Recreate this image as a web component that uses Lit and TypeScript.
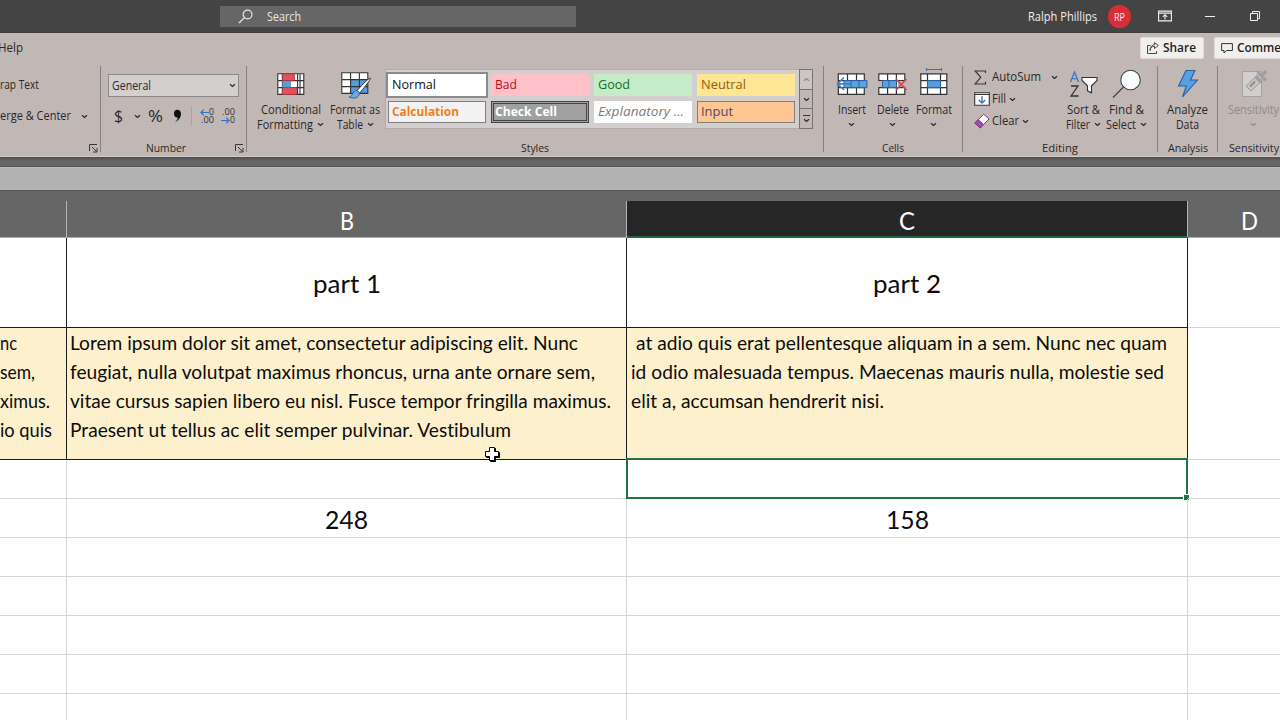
import { LitElement, html, css, svg } from "lit";
import { customElement, property } from "lit/decorators.js";

/** One line of text, squeezed or stretched to an exact advance width. */
@customElement("fit-text")
class FitText extends LitElement {
  @property({ type: Number }) w = 0;
  @property() text = "";
  static styles = css`
    :host { display: inline-block; white-space: pre; flex: none; text-align: left; font-variant-ligatures: none; }
    .t { display: inline-block; transform-origin: 0 50%; }
  `;
  render() {
    return html`<span class="t">${this.text}</span>`;
  }
  updated() {
    const s = this.renderRoot.querySelector(".t") as HTMLElement;
    s.style.transform = "none";
    this.style.width = "auto";
    const natural = s.getBoundingClientRect().width;
    this.style.width = `${this.w}px`;
    if (natural > 0) s.style.transform = `scaleX(${this.w / natural})`;
  }
}

const fit = (text: string, w: number, cls = "") =>
  html`<fit-text class=${cls} .text=${text} .w=${w}></fit-text>`;

const chev = (cls = "") => html`<svg class="chev ${cls}" width="7" height="5" viewBox="0 0 7 5">
  <path d="M1 1.2 3.5 3.5 6 1.2" fill="none" stroke="currentColor" stroke-width="1.2"/></svg>`;

const launcher = html`<svg class="launch" width="9" height="9" viewBox="0 0 9 9">
  <path d="M.5 7V.5H8M3 3l4.5 4.5M8 4v4H4" fill="none" stroke="#3a3635"/></svg>`;

const tableGrid = svg`<path d="M.8.8h26v20.6H.8z" fill="#fff"/>`;
const gridLines = svg`<path d="M.8.8h26v20.6H.8zM.8 7.6h26M.8 14.6h26M9.6.8v20.6M18.4.8v20.6" fill="none" stroke="#333" stroke-width="1.1"/>`;

const icons = {
  conditional: html`<svg width="28" height="22" viewBox="0 0 28 22">
    ${tableGrid}
    <path d="M.8.8h26v20.6H.8zM.8 7.6h26M.8 14.6h26M5.4.8v20.6M20.6.8v20.6M23 .8v20.6" fill="none" stroke="#333" stroke-width="1.1"/>
    <path d="M5.4.8h12v6.8h-12zM5.4 14.6h14v6.8h-14z" fill="#e0525a" stroke="#a8353b" stroke-width=".8"/>
    <path d="M5.4 8h8.6v6.2H5.4z" fill="#559ddd"/></svg>`,
  table: html`<svg width="30" height="28" viewBox="0 0 30 28">
    ${tableGrid}<path d="M9.6 7.6h17.2v13.8H9.6z" fill="#559ddd"/>${gridLines}
    <path d="M29.3 6.2c1 1-8.5 12.6-10.800 14.600l-2.400-2.100C18 16 28.200 5.300 29.300 6.200z" fill="#fff" stroke="#333"/>
    <path d="M15.800 18.400c-4 0-3.600 5.400-7.600 6.500 4.500 2.600 10.300.8 10.400-4.100z" fill="#6ea9e4" stroke="#2b62a5"/></svg>`,
  insert: html`<svg width="32" height="22" viewBox="0 0 32 22">
    <g transform="translate(1.500 0)">${tableGrid}
    <path d="M.8.8h26v20.600H.8zM.8 7.600h26M.8 14.600h26M10 .8v20.600M19 .8v20.600" fill="none" stroke="#333" stroke-width="1.200"/></g>
    <path d="M8 7.600h23v7H8zM15 7.600v7M23 7.600v7" fill="#5ba2e0" stroke="#2b62a5"/>
    <path d="M14 10.800H1.500M8 4.500 1.500 10.800 8 17" fill="none" stroke="#477fc4" stroke-width="1.700"/></svg>`,
  del: html`<svg width="30" height="22" viewBox="0 0 30 22">
    ${tableGrid}
    <path d="M.8.8h26v20.600H.8zM.8 7.600h26M.8 14.600h26M9.600.8v20.600M18.400.8v20.600" fill="none" stroke="#333" stroke-width="1.200"/>
    <path d="M0 8.200h4v5.800H0z" fill="#c1b8b6"/><path d="M20 8.200h9v5.800h-9z" fill="#c1b8b6"/>
    <path d="M4.500 7.600h14v7h-14zM11 7.600v7" fill="#5ba2e0" stroke="#2b62a5"/>
    <path d="M18 6l10.500 11M28.500 6 18 17" stroke="#cf4a4c" stroke-width="1.800"/></svg>`,
  format: html`<svg width="28" height="28" viewBox="0 0 28 28">
    <path d="M6.500 0v3M21.500 0v3M6.500 1.500h15" fill="none" stroke="#3f6fb5" stroke-width="1.100"/>
    <g transform="translate(0 5)">${tableGrid}<path d="M.8.8h26v20.600H.8zM.8 7.600h26M.8 14.600h26M7.500.8v20.600M20.500.8v20.600" fill="none" stroke="#333" stroke-width="1.200"/>
    <path d="M7.500 7.600h13v7h-13z" fill="#559ddd" stroke="#2b62a5"/></g></svg>`,
  sigma: html`<svg width="13" height="15" viewBox="0 0 13 15">
    <path d="M11.500 3V1H1l5.800 6.300L1 14h10.500v-2.200" fill="none" stroke="#3a3635" stroke-width="1.200"/></svg>`,
  fill: html`<svg width="16" height="14" viewBox="0 0 16 14">
    <path d="M.7.7h14.600v12.600H.7z" fill="#fff" stroke="#333" stroke-width="1.100"/><path d="M1 2.500h14" stroke="#333"/>
    <path d="M8 4v7M4.800 8 8 11.200 11.200 8" fill="none" stroke="#2f6fc0" stroke-width="1.300"/></svg>`,
  clear: html`<svg width="16" height="16" viewBox="0 0 16 16">
    <path d="M9.700 1.200 15 6 6.200 15 .8 10z" fill="#fff" stroke="#7a3a86"/>
    <path d="M4.200 6.600 9.600 11.500 6.200 15 .8 10z" fill="#a648b4" stroke="#7a3a86"/></svg>`,
  sort: html`<svg width="30" height="28" viewBox="0 0 30 28">
    <path d="M1.500 12 5.500 2 9.500 12M2.900 8.700h5.200" fill="none" stroke="#3f74c4" stroke-width="1.300"/>
    <path d="M2 16h7L2 26h7.500" fill="none" stroke="#333" stroke-width="1.300"/>
    <path d="M13 7.500h15v3l-5.500 5.300v7l-4-2v-5L13 10.500z" fill="#fff" stroke="#333" stroke-width="1.100"/></svg>`,
  find: html`<svg width="30" height="30" viewBox="0 0 30 30">
    <circle cx="18.500" cy="11" r="9.800" fill="#f9fcfc" stroke="#444" stroke-width="1.100"/><path d="M11.500 18 1 28.500" stroke="#444" stroke-width="1.300"/></svg>`,
  analyze: html`<svg width="24" height="30" viewBox="0 0 24 30">
    <path d="M10 1.500h9L14.500 11h7L6.500 28l3.800-11H2.500z" fill="#56a0e4" stroke="#2c5f9c" stroke-width="1.100"/></svg>`,
  sensitivity: html`<svg width="28" height="30" viewBox="0 0 28 30">
    <path d="M1.500 2.500h19v25h-19z" fill="#d2cfce" stroke="#a8a3a1"/>
    <path d="M5 17 14 8.500l5 5L10 22z" fill="#c9c5c4" stroke="#9b9796"/><path d="M9 17.500l5-5" stroke="#918d8c" stroke-width="2"/>
    <path d="M16.500 3 25 11.500M14.500 7l6.500 6.500M20 7l5.500-5" stroke="#a39f9e" stroke-width="3.200"/></svg>`,
  search: html`<svg width="16" height="16" viewBox="0 0 16 16">
    <circle cx="9.600" cy="5.500" r="4.400" fill="none" stroke="#e8e8e8" stroke-width="1.200"/><path d="M6.400 8.600 1 14" stroke="#e8e8e8" stroke-width="1.300"/></svg>`,
  ribbonMode: html`<svg width="14" height="12" viewBox="0 0 14 12">
    <path d="M.6 1.100h12.800v9.800H.6zM.6 3.100h12.800M7 9.500V5M4.800 6.800 7 4.700l2.200 2.100" fill="none" stroke="#f0f0f0" stroke-width="1.100"/></svg>`,
  min: html`<svg width="10" height="10" viewBox="0 0 10 10"><path d="M0 5.500h10" stroke="#eee"/></svg>`,
  restore: html`<svg width="10" height="10" viewBox="0 0 10 10">
    <path d="M.5 2.500h7v7h-7zM2.500 2.500v-2h7v7h-2" fill="none" stroke="#eee"/></svg>`,
  share: html`<svg width="12" height="12" viewBox="0 0 12 12">
    <path d="M3.500 3.500h-3v8h9V9M3 8.500C3.300 5.500 5 4.300 7.500 4.300V6.500L11.300 3.400 7.500.7v2C5 2.700 3.300 5 3 8.500z" fill="none" stroke="#333" stroke-width=".9"/></svg>`,
  comment: html`<svg width="12" height="11" viewBox="0 0 12 11">
    <path d="M.6.6h10.800v6.900H5.600L3 10V7.500H.6z" fill="none" stroke="#333" stroke-width="1"/></svg>`,
  comma: html`<svg width="9" height="14" viewBox="0 0 9 14">
    <path d="M4.200.8C6.500.8 8 2.300 8 5c0 3.500-2.500 6.700-6.200 8.200 2-1.800 3-3.400 3-4.700C2.500 8.900 1 7.200 1 4.700 1 2.300 2.300.8 4.200.8z" fill="#111"/></svg>`,
  arrowL: html`<svg width="9" height="7" viewBox="0 0 9 7"><path d="M9 3.500H1M3.800.7 1 3.500l2.800 2.800" fill="none" stroke="#2f6fd0" stroke-width="1.200"/></svg>`,
  arrowR: html`<svg width="9" height="7" viewBox="0 0 9 7"><path d="M0 3.500h8M5.200.7 8 3.500 5.200 6.300" fill="none" stroke="#2f6fd0" stroke-width="1.200"/></svg>`,
};

const big = (icon: unknown, l1: unknown, l2: unknown, cls = "") => html`
  <div class="big ${cls}"><div class="pic">${icon}</div><div class="ln">${l1}</div><div class="ln">${l2}</div></div>`;

@customElement("app-root")
class AppRoot extends LitElement {
  static styles = css`
    :host { display: flex; flex-direction: column; width: 1280px; height: 720px; overflow: hidden; position: relative;
      font: 12px/16px "Open Sans", "Noto Sans", sans-serif; color: #2b2726; background: #fff; }
    * { box-sizing: border-box; }
    svg { display: block; flex: none; }
    .title { height: 33px; background: #444; display: flex; color: #f0f0f0; padding-left: 220px; flex: none; border-bottom: 1px solid #3e3e3e; }
    .search { width: 356px; height: 21px; margin-top: 6px; background: #666; display: flex; align-items: center; padding-left: 18px; gap: 13px; color: #e6e6e6; flex: none; }
    .user { margin-left: 452px; height: 33px; display: flex; align-items: center; flex: none; }
    .avatar { width: 23px; height: 23px; border-radius: 50%; background: #d62f35; margin: 0 27px 0 11px; font-size: 10px; display: flex; align-items: center; justify-content: center; }
    .winbtns { display: flex; align-items: center; height: 32px; flex: none; }
    .winbtns svg { margin-right: 33px; } .winbtns svg + svg { margin-right: 35px; } .winbtns svg:last-of-type { margin-right: 0; }
    .tabs { height: 33px; background: #c1b8b6; flex: none; display: flex; padding-top: 4px; }
    .help { margin: 3px 0 0 -2px; width: 1142px; flex: none; }
    .btn { height: 22px; width: 64px; background: #f1efee; border: 1px solid #e0dbda; border-radius: 2px; display: flex; align-items: center; gap: 4px; padding-left: 6px; font-weight: 600; color: #222; flex: none; }
    .btn.cm { margin-left: 10px; width: 90px; }
    .ribbon { height: 91px; background: #c1b8b6; display: flex; flex: none; overflow: hidden; border-bottom: 1px solid #d0c8c6; }
    .group { display: flex; flex-direction: column; flex: none; height: 90px; }
    .sep { width: 1px; height: 86px; background: #858180; flex: none; }
    .body { height: 74px; display: flex; }
    .label { height: 16px; display: flex; align-items: center; justify-content: center; position: relative; font-size: 11px; }
    .launch { position: absolute; right: 2px; top: 4px; }
    .g0 { width: 100px; } .g1 { width: 145px; } .g2 { width: 576px; } .g3 { width: 138px; } .g4 { width: 194px; } .g5 { width: 59px; } .g6 { width: 72px; }
    .g1 .label { padding-right: 16px; }
    .col { display: flex; flex-direction: column; }
    .g0 .col { padding-top: 11px; gap: 15px; }
    .line { display: flex; align-items: center; height: 16px; gap: 10px; }
    .g1 .col { padding: 8px 0 0 7px; gap: 9px; }
    .combo { width: 131px; height: 23px; border: 1px solid #8d8988; background: #d2cfce; display: flex; align-items: center; justify-content: space-between; padding: 0 2px 0 3px; }
    .nums { display: grid; grid-template-columns: 20px 14px 25px 18px 7px 21px 18px; height: 20px; align-items: center; padding-left: 6px; }
    .sym { font-size: 17px; line-height: 20px; }
    .vsep { width: 1px; height: 20px; background: #aaa3a1; }
    .dec { display: flex; flex-direction: column; font-size: 9px; line-height: 8px; align-items: flex-end; width: 16px; color: #333; }
    .dec div { display: flex; height: 8px; align-items: center; }
    .big { display: flex; flex-direction: column; align-items: center; flex: none; }
    .pic { height: 36px; display: flex; align-items: center; }
    .ln { height: 15px; line-height: 15px; display: flex; align-items: center; gap: 4px; white-space: nowrap; }
    .cond { width: 87px; } .fat { width: 42px; } .fat .pic { padding: 4px 0 0 2px; }
    .gallery { margin: 3px 0 0 9px; width: 428px; height: 60px; background: #d2cfce; border: 1px solid #b0acab; display: flex; justify-content: space-between; }
    .tiles { padding: 4px 0 0 2px; display: grid; grid-template-columns: repeat(4, 98px); grid-template-rows: 22px 22px; gap: 5px; font-size: 13px; line-height: 16px; }
    .tile { display: flex; align-items: center; padding: 0 0 2px 4px; }
    .normal { background: #fff; outline: 2px solid #8b8b8b; color: #111; }
    .bad { background: #ffc0c8; color: #b01020; } .good { background: #c4ecc9; color: #156e1c; }
    .neutral { background: #ffe694; color: #9a5c0a; }
    .calc { background: #f2f2f2; border: 1px solid #7f7f7f; color: #f08019; font-weight: 700; padding-left: 3px; }
    .check { background: #a0a0a0; border: 3px double #444; color: #fff; font-weight: 700; padding-left: 1px; }
    .expl { background: #fff; color: #7c7c7c; font-style: italic; } .input { background: #ffc892; border: 1px solid #7f7f7f; color: #54466e; padding-left: 3px; }
    .scroll { width: 14px; display: flex; flex-direction: column; margin: -1px; border: 1px solid #777372; background: #c1b8b6; }
    .scroll div { flex: 1; display: flex; flex-direction: column; gap: 2px; align-items: center; justify-content: center; border-top: 1px solid #777372; }
    .scroll div:first-child { border-top: 0; color: #8d8786; background: #cbc6c4; }
    .up { transform: scaleY(-1); } .bar { width: 7px; height: 1px; background: #333; }
    .g3 .body { padding-left: 7px; } .g3 .big { width: 41px; } .g3 .fmt .pic { padding-bottom: 4px; }
    .g4 .col { padding: 3px 0 0 11px; width: 98px; gap: 6px; } .g4 .line { gap: 3px; }
    .ic { width: 15px; flex: none; } .line .far { margin-left: 7px; }
    .g4 .big { width: 43px; } .g4 .srt { margin-left: 1px; } .srt .pic { padding-left: 1px; }
    .g5 .big { width: 59px; } .g6 .big { width: 71px; } .dim { color: #8f8988; } .g6 .pic { padding-left: 2px; }
    .shade { height: 10px; background: linear-gradient(#4e4e4e, #666 4px); border-bottom: 1px solid #555; flex: none; }
    .formula { height: 24px; background: #b2b2b2; border-bottom: 1px solid #555; border-top: 1px solid #bcbcbc; flex: none; }
    .gap { height: 10px; background: #666; flex: none; }
    .sheet { display: grid; grid-template-columns: 67px 560px 561px 92px; grid-template-rows: 37px 90px 132px 39px 39px 39px 39px 39px 39px 39px; flex: none;
      font-family: Lato, "Open Sans", sans-serif; color: #0c0c0c; }
    .h { background: #666; color: #fff; border-right: 1px solid #b5b5b5; border-bottom: 1px solid #aaa; display: flex; align-items: center; justify-content: center; font-size: 25px; padding-top: 2px; }
    .h.sel { background: #262626; border-bottom: 2px solid #1f6b40; box-shadow: -1px 0 #b5b5b5; padding-top: 3px; }
    .h.d { justify-content: flex-start; padding-left: 53px; border-right: 0; }
    .c { border-right: 1px solid #d6d6d6; border-bottom: 1px solid #d6d6d6; display: flex; align-items: center; justify-content: center; font-size: 24.500px; position: relative; padding-top: 3px; }
    .c.last { border-right: 0; }
    .k { border-color: #1c1c1c; }
    .p { background: #fdf0cd; flex-direction: column; align-items: flex-start; justify-content: flex-start; padding: 1px 0 0 3px; font-size: 18.300px; line-height: 29px; }
    .p fit-text { height: 29px; } .p.a { padding-left: 0; } .lead { margin-left: 5px; }
    .p.r { padding-left: 3.500px; }
    .selbox { position: absolute; left: -1px; top: -2px; width: 562px; height: 41px; border: 2px solid #217346; }
    .handle { position: absolute; right: -3px; bottom: -3px; width: 5px; height: 5px; background: #217346; box-shadow: 0 0 0 1px #fff; }
    .cursor { position: absolute; left: 484px; top: 446px; }
  `;

  render() {
    const empty = Array.from({ length: 5 });
    return html`
      <div class="title">
        <div class="search">${icons.search}${fit("Search", 34)}</div>
        <div class="user">${fit("Ralph Phillips", 69)}<div class="avatar">${fit("RP", 11)}</div></div>
        <div class="winbtns">${icons.ribbonMode}${icons.min}${icons.restore}</div>
      </div>
      <div class="tabs">
        <div class="help">${fit("Help", 25)}</div>
        <div class="btn">${icons.share}${fit("Share", 33)}</div>
        <div class="btn cm">${icons.comment}${fit("Comments", 62)}</div>
      </div>
      <div class="ribbon">
        <div class="group g0">
          <div class="body"><div class="col">
            <div class="line">${fit("rap Text", 39)}</div>
            <div class="line">${fit("erge & Center", 71)}${chev()}</div>
          </div></div>
          <div class="label">${launcher}</div>
        </div><div class="sep"></div>
        <div class="group g1">
          <div class="body"><div class="col">
            <div class="combo">${fit("General", 39)}${chev()}</div>
            <div class="nums">
              <span class="sym">${fit("$", 9)}</span>${chev()}<span class="sym">${fit("%", 15)}</span>${icons.comma}
              <span class="vsep"></span>
              <div class="dec"><div>${icons.arrowL}${fit("0", 5)}</div><div>${fit(".00", 13)}</div></div>
              <div class="dec"><div>${fit(".00", 13)}</div><div>${icons.arrowR}${fit("0", 5)}</div></div>
            </div>
          </div></div>
          <div class="label">${fit("Number", 40)}${launcher}</div>
        </div><div class="sep"></div>
        <div class="group g2">
          <div class="body">
            ${big(icons.conditional, fit("Conditional", 60), html`${fit("Formatting", 56)}${chev()}`, "cond")}
            ${big(icons.table, fit("Format as", 50), html`${fit("Table", 26)}${chev()}`, "fat")}
            <div class="gallery">
              <div class="tiles">
                <div class="tile normal">${fit("Normal", 44)}</div>
                <div class="tile bad">${fit("Bad", 22)}</div>
                <div class="tile good">${fit("Good", 32)}</div>
                <div class="tile neutral">${fit("Neutral", 45)}</div>
                <div class="tile calc">${fit("Calculation", 67)}</div>
                <div class="tile check">${fit("Check Cell", 62)}</div>
                <div class="tile expl">${fit("Explanatory ...", 86)}</div>
                <div class="tile input">${fit("Input", 32)}</div>
              </div>
              <div class="scroll"><div>${chev("up")}</div><div>${chev()}</div><div><span class="bar"></span>${chev()}</div></div>
            </div>
          </div>
          <div class="label">${fit("Styles", 28)}</div>
        </div><div class="sep"></div>
        <div class="group g3">
          <div class="body">
            ${big(icons.insert, fit("Insert", 28), chev())}
            ${big(icons.del, fit("Delete", 32), chev())}
            ${big(icons.format, fit("Format", 36), chev(), "fmt")}
          </div>
          <div class="label">${fit("Cells", 22)}</div>
        </div><div class="sep"></div>
        <div class="group g4">
          <div class="body">
            <div class="col">
              <div class="line"><span class="ic">${icons.sigma}</span>${fit("AutoSum", 49)}${chev("far")}</div>
              <div class="line"><span class="ic">${icons.fill}</span>${fit("Fill", 14)}${chev()}</div>
              <div class="line"><span class="ic">${icons.clear}</span>${fit("Clear", 27)}${chev()}</div>
            </div>
            ${big(icons.sort, fit("Sort &", 33), html`${fit("Filter", 24)}${chev()}`, "srt")}
            ${big(icons.find, fit("Find &", 35), html`${fit("Select", 30)}${chev()}`)}
          </div>
          <div class="label">${fit("Editing", 36)}</div>
        </div><div class="sep"></div>
        <div class="group g5">
          <div class="body">${big(icons.analyze, fit("Analyze", 41), fit("Data", 23))}</div>
          <div class="label">${fit("Analysis", 40)}</div>
        </div><div class="sep"></div>
        <div class="group g6">
          <div class="body dim">${big(icons.sensitivity, fit("Sensitivity", 51), chev())}</div>
          <div class="label">${fit("Sensitivity", 50)}</div>
        </div>
      </div>
      <div class="shade"></div><div class="formula"></div><div class="gap"></div>
      <div class="sheet">
        <div class="h"></div><div class="h">${fit("B", 14)}</div><div class="h sel">${fit("C", 16)}</div><div class="h d">${fit("D", 17)}</div>

        <div class="c k"></div><div class="c k">${fit("part 1", 68)}</div><div class="c k">${fit("part 2", 68)}</div><div class="c last"></div>

        <div class="c k p a">${fit("nc", 17)}${fit("sem,", 35)}${fit("ximus.", 50)}${fit("io quis", 52)}</div>
        <div class="c k p">
          ${fit("Lorem ipsum dolor sit amet, consectetur adipiscing elit. Nunc", 508)}
          ${fit("feugiat, nulla volutpat maximus rhoncus, urna ante ornare sem,", 525)}
          ${fit("vitae cursus sapien libero eu nisl. Fusce tempor fringilla maximus.", 541)}
          ${fit("Praesent ut tellus ac elit semper pulvinar. Vestibulum", 441)}
        </div>
        <div class="c k p r">
          ${fit("at adio quis erat pellentesque aliquam in a sem. Nunc nec quam", 531, "lead")}
          ${fit("id odio malesuada tempus. Maecenas mauris nulla, molestie sed", 533)}
          ${fit("elit a, accumsan hendrerit nisi.", 253)}
        </div>
        <div class="c last"></div>

        <div class="c"></div><div class="c"></div>
        <div class="c"><div class="selbox"><div class="handle"></div></div></div><div class="c last"></div>

        <div class="c"></div><div class="c">${fit("248", 43)}</div><div class="c">${fit("158", 43)}</div><div class="c last"></div>
        ${empty.map(() => html`<div class="c"></div><div class="c"></div><div class="c"></div><div class="c last"></div>`)}
      </div>
      <svg class="cursor" width="17" height="17" viewBox="0 0 17 17">
        <path d="M5.500 1.500h5v4h4v5h-4v4h-5v-4h-4v-5h4z" transform="translate(1 1)" fill="#000" stroke="#000"/>
        <path d="M5.500 1.500h5v4h4v5h-4v4h-5v-4h-4v-5h4z" fill="#fff" stroke="#000"/></svg>
    `;
  }
}
